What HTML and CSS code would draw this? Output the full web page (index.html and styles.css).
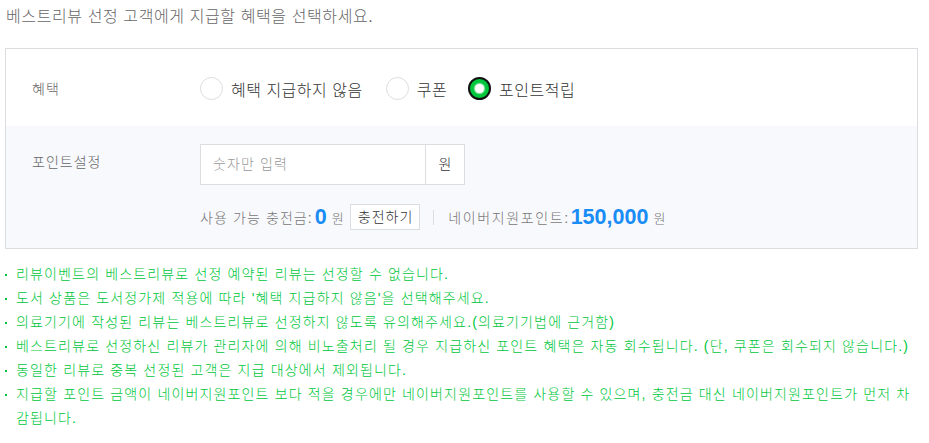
FILE: index.html
```html
<!DOCTYPE html>
<html lang="ko">
<head>
<meta charset="utf-8">
<link rel="stylesheet" href="styles.css">
</head>
<body>
<div class="page">
  <p class="title">베스트리뷰 선정 고객에게 지급할 혜택을 선택하세요.</p>
  <div class="box">
    <div class="row row-benefit">
      <div class="label">혜택</div>
      <div class="radios">
        <label class="radio"><span class="dot"></span><span class="rtext">혜택 지급하지 않음</span></label>
        <label class="radio"><span class="dot"></span><span class="rtext">쿠폰</span></label>
        <label class="radio"><span class="dot on"></span><span class="rtext">포인트적립</span></label>
      </div>
    </div>
    <div class="row row-point">
      <div class="label">포인트설정</div>
      <div class="point-body">
        <div class="input-group">
          <div class="input">숫자만 입력</div>
          <div class="addon">원</div>
        </div>
        <div class="info">
          <span class="info-label">사용 가능 충전금:</span>
          <span class="num">0</span>
          <span class="unit">원</span>
          <span class="btn">충전하기</span>
          <span class="sep"></span>
          <span class="info-label wide">네이버지원포인트:</span>
          <span class="num">150,000</span>
          <span class="unit">원</span>
        </div>
      </div>
    </div>
  </div>
  <ul class="notes">
    <li>리뷰이벤트의 베스트리뷰로 선정 예약된 리뷰는 선정할 수 없습니다.</li>
    <li>도서 상품은 도서정가제 적용에 따라 '혜택 지급하지 않음'을 선택해주세요.</li>
    <li>의료기기에 작성된 리뷰는 베스트리뷰로 선정하지 않도록 유의해주세요.(의료기기법에 근거함)</li>
    <li>베스트리뷰로 선정하신 리뷰가 관리자에 의해 비노출처리 될 경우 지급하신 포인트 혜택은 자동 회수됩니다. (단, 쿠폰은 회수되지 않습니다.)</li>
    <li>동일한 리뷰로 중복 선정된 고객은 지급 대상에서 제외됩니다.</li>
    <li>지급할 포인트 금액이 네이버지원포인트 보다 적을 경우에만 네이버지원포인트를 사용할 수 있으며, 충전금 대신 네이버지원포인트가 먼저 차감됩니다.</li>
  </ul>
</div>
</body>
</html>
```

FILE: styles.css
```css
* { box-sizing: border-box; }
html, body { margin: 0; padding: 0; background: #fff; }
body {
  font-family: "Liberation Sans", "Noto Sans CJK KR", sans-serif;
  font-weight: 300;
  color: #333;
}
.page { padding: 0 0 0 5px; width: 929px; }
.title {
  margin: 0;
  padding: 6px 0 0 1px;
  height: 48px;
  font-size: 16px;
  letter-spacing: 0.6px;
  line-height: 22px;
  color: #666;
}
.box {
  width: 913px;
  border: 1px solid #dcdde1;
}
.row { display: flex; }
.label {
  width: 194px;
  padding-left: 26px;
  font-size: 14px;
  letter-spacing: 1px;
  color: #666;
  flex: none;
}
.row-benefit {
  height: 77px;
  align-items: center;
  background: #fff;
}
.radios { display: flex; align-items: center; padding-top: 2px; }
.radio {
  display: flex;
  align-items: center;
  margin-right: 23px;
  font-size: 16px;
  letter-spacing: 0.5px;
  color: #333;
}
.radio:nth-child(2) { margin-right: 21px; }
.dot {
  width: 23px; height: 23px;
  border-radius: 50%;
  border: 1px solid #dcdde1;
  background: #fff;
  margin-right: 8px;
  display: flex; align-items: center; justify-content: center;
}
.dot.on {
  border: 2px solid #111;
  background: #00c73c;
}
.dot.on::after {
  content: "";
  width: 9px; height: 9px;
  border-radius: 50%;
  background: #fff;
  box-shadow: 0 0 1px 1px rgba(255,255,255,0.6);
}
.row-point {
  background: #f8f9fc;
  padding: 18px 0 18px;
}
.row-point .label { padding-top: 8px; line-height: 20px; }
.input-group { display: flex; height: 41px; width: 265px; }
.input {
  width: 226px;
  border: 1px solid #dcdde1;
  background: #fff;
  padding-left: 12px;
  font-size: 14px;
  letter-spacing: 1.1px;
  line-height: 39px;
  color: #999;
}
.addon {
  width: 39px;
  border: 1px solid #dcdde1;
  border-left: none;
  background: #fff;
  font-size: 14px;
  line-height: 39px;
  text-align: center;
  color: #333;
}
.info {
  display: flex;
  align-items: center;
  margin-top: 19px;
  height: 26px;
  font-size: 14px;
  letter-spacing: 1.1px;
  color: #777;
}
.info-label { margin-right: 2px; }
.info-label.wide { letter-spacing: 1.6px; margin-right: 1px; }
.num {
  font-size: 21.5px;
  font-weight: bold;
  letter-spacing: 0;
  color: #1a8cf5;
  margin-right: 5px;
}
.unit { font-size: 13px; letter-spacing: 0; color: #777; margin-right: 6px; }
.btn {
  display: inline-block;
  height: 26px;
  line-height: 24px;
  padding: 0 6px 0 7px;
  border: 1px solid #dcdde1;
  background: #fff;
  color: #333;
  font-size: 14px;
  letter-spacing: 1px;
}
.sep { width: 1px; height: 15px; background: #dcdde1; margin: 0 14px 0 13px; }
.notes {
  list-style: none;
  margin: 13px 0 0;
  padding: 0 0 0 11px;
  width: 916px;
  font-size: 14px;
  letter-spacing: 1.15px;
  line-height: 24px;
  color: #00c73c;
}
.notes li { position: relative; }
.notes li::before {
  content: "";
  position: absolute;
  left: -11px; top: 12px;
  width: 2px; height: 2px;
  background: #00c73c;
}
```
